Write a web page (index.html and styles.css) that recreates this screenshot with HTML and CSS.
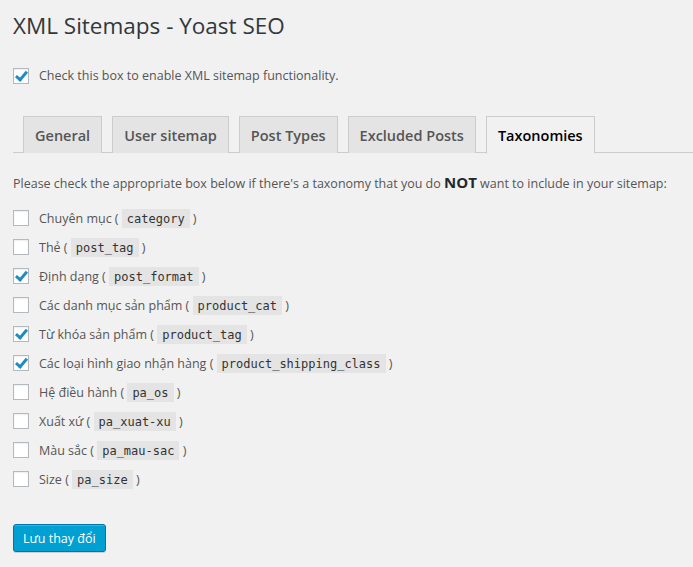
FILE: index.html
```html
<!DOCTYPE html>
<html lang="vi">
<head>
<meta charset="utf-8">
<link rel="stylesheet" href="styles.css">
</head>
<body>
<div class="wrap">
  <h1 class="title">XML Sitemaps - Yoast SEO</h1>
  <label class="enable"><span class="cb checked"></span><span>Check this box to enable XML sitemap functionality.</span></label>
  <nav class="tabs">
    <span class="tab">General</span>
    <span class="tab">User sitemap</span>
    <span class="tab">Post Types</span>
    <span class="tab">Excluded Posts</span>
    <span class="tab active">Taxonomies</span>
  </nav>
  <p class="intro">Please check the appropriate box below if there's a taxonomy that you do <strong>NOT</strong> want to include in your sitemap:</p>
  <ul class="list">
    <li class="row"><span class="cb"></span><span class="lbl">Chuyên mục ( <code>category</code> )</span></li>
    <li class="row"><span class="cb"></span><span class="lbl">Thẻ ( <code>post_tag</code> )</span></li>
    <li class="row"><span class="cb checked"></span><span class="lbl">Định dạng ( <code>post_format</code> )</span></li>
    <li class="row"><span class="cb"></span><span class="lbl">Các danh mục sản phẩm ( <code>product_cat</code> )</span></li>
    <li class="row"><span class="cb checked"></span><span class="lbl">Từ khóa sản phẩm ( <code>product_tag</code> )</span></li>
    <li class="row"><span class="cb checked"></span><span class="lbl">Các loại hình giao nhận hàng ( <code>product_shipping_class</code> )</span></li>
    <li class="row"><span class="cb"></span><span class="lbl">Hệ điều hành ( <code>pa_os</code> )</span></li>
    <li class="row"><span class="cb"></span><span class="lbl">Xuất xứ ( <code>pa_xuat-xu</code> )</span></li>
    <li class="row"><span class="cb"></span><span class="lbl">Màu sắc ( <code>pa_mau-sac</code> )</span></li>
    <li class="row"><span class="cb"></span><span class="lbl">Size ( <code>pa_size</code> )</span></li>
  </ul>
  <button class="save" type="button">Lưu thay đổi</button>
</div>
</body>
</html>
```
FILE: styles.css
```css
html, body {
  margin: 0;
  padding: 0;
  background: #f1f1f1;
}
body {
  font-family: "Open Sans", "Noto Sans", sans-serif;
  font-size: 12.5px;
  color: #555;
  width: 693px;
  height: 567px;
  overflow: hidden;
}
.wrap {
  display: flex;
  flex-direction: column;
  align-items: flex-start;
  padding-left: 13px;
}
.title {
  margin: 11px 0 0 0;
  font-size: 22.5px;
  line-height: 29px;
  font-weight: 400;
  color: #32373c;
}
.enable {
  display: flex;
  align-items: center;
  gap: 10px;
  margin-top: 28px;
  height: 16px;
  line-height: 16px;
}
.cb {
  position: relative;
  flex: none;
  width: 14px;
  height: 14px;
  border: 1px solid #b4b9be;
  background: #fff;
  box-shadow: inset 0 1px 2px rgba(0,0,0,0.07);
}
.cb.checked::after {
  content: "";
  position: absolute;
  left: 4px;
  top: 0px;
  width: 4px;
  height: 9px;
  border-right: 3px solid #1e8cbe;
  border-bottom: 3px solid #1e8cbe;
  transform: rotate(40deg);
}
.tabs {
  display: flex;
  align-self: stretch;
  gap: 10px;
  margin-top: 32px;
  padding-left: 10px;
  border-bottom: 1px solid #ccc;
  height: 37px;
  box-sizing: border-box;
}
.tab {
  display: flex;
  align-items: center;
  box-sizing: border-box;
  height: 37px;
  padding: 0 11px;
  border: 1px solid #ccc;
  border-bottom: none;
  background: #e4e4e4;
  font-size: 14.5px;
  font-weight: 600;
  color: #555;
  margin-bottom: -1px;
}
.tab.active {
  background: #f1f1f1;
  color: #000;
  height: 38px;
  border-bottom: 1px solid #f1f1f1;
}
.intro {
  margin: 19px 0 0 0;
  line-height: 20px;
}
.intro strong {
  font-size: 15px;
  font-weight: 700;
  color: #23282d;
}
.list {
  list-style: none;
  margin: 14px 0 0 0;
  padding: 0;
  display: flex;
  flex-direction: column;
  gap: 9px;
}
.row {
  display: flex;
  align-items: center;
  gap: 10px;
  height: 20px;
}
.lbl {
  white-space: nowrap;
}
code {
  font-family: "DejaVu Sans Mono", "Liberation Mono", monospace;
  font-size: 12px;
  background: #e4e4e4;
  padding: 3px 5px 2px;
  color: #333;
}
.save {
  margin-top: 35px;
  height: 28px;
  padding: 0 9px;
  border: 1px solid #0073aa;
  border-radius: 3px;
  background: #00a0d2;
  color: #fff;
  font-family: "Open Sans", "Noto Sans", sans-serif;
  font-size: 12.5px;
  box-shadow: inset 0 1px 0 rgba(120,200,230,0.5), 0 1px 0 rgba(0,0,0,0.15);
}
```
